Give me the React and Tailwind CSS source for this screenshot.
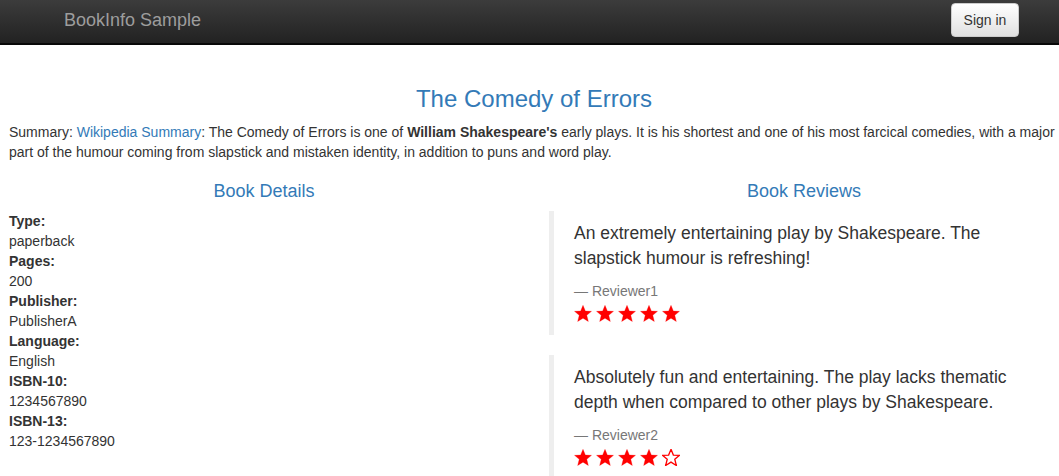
const Star = ({ filled }) => (
  <svg width="18" height="17" viewBox="0 0 24 23" className="shrink-0">
    <path
      d="M12 0.5 L15.2 8.2 L23.5 8.6 L17.1 13.9 L19.2 22.3 L12 17.8 L4.8 22.3 L6.9 13.9 L0.5 8.6 L8.8 8.2 Z"
      fill={filled ? '#ff0000' : 'none'}
      stroke="#ff0000"
      strokeWidth={filled ? 0.4 : 1.8}
      strokeLinejoin="miter"
    />
  </svg>
);

const details = [
  ['Type:', 'paperback'],
  ['Pages:', '200'],
  ['Publisher:', 'PublisherA'],
  ['Language:', 'English'],
  ['ISBN-10:', '1234567890'],
  ['ISBN-13:', '123-1234567890'],
];

const reviews = [
  {
    text: 'An extremely entertaining play by Shakespeare. The slapstick humour is refreshing!',
    reviewer: 'Reviewer1',
    stars: 5,
  },
  {
    text: 'Absolutely fun and entertaining. The play lacks thematic depth when compared to other plays by Shakespeare.',
    reviewer: 'Reviewer2',
    stars: 4,
  },
];

export default function App() {
  return (
    <div className="min-h-[476px] bg-white text-[14px] leading-[20px] text-[#333]" style={{ fontFamily: '"Liberation Sans", Arial, sans-serif' }}>
      {/* navbar */}
      <nav className="flex h-[45px] items-center justify-between border-b-2 border-[#080808] bg-gradient-to-b from-[#3c3c3c] to-[#222] pl-[64px] pr-[40px]">
        <span className="-mt-[3px] text-[18px] text-[#9d9d9d]">BookInfo Sample</span>
        <button className="-mt-[3px] h-[34px] w-[68px] rounded-[4px] border border-[#ccc] bg-gradient-to-b from-white to-[#e0e0e0] text-[14px] text-[#333]">
          Sign in
        </button>
      </nav>

      <div className="pl-[9px]">
        <h3 className="mt-[41px] mb-[10px] text-center text-[24px] leading-[26px] text-[#337ab7]">The Comedy of Errors</h3>
        <p>
          Summary: <a className="text-[#337ab7]">Wikipedia Summary</a>: The Comedy of Errors is one of{' '}
          <b>William Shakespeare's</b> early plays. It is his shortest and one of his most farcical comedies, with a major
          part of the humour coming from slapstick and mistaken identity, in addition to puns and word play.
        </p>

        <div className="mt-[19px] grid grid-cols-[510px_510px] gap-x-[30px]">
          <div>
            <h4 className="mb-[10px] text-center text-[18px] leading-[20px] text-[#337ab7]">Book Details</h4>
            <dl>
              {details.map(([k, v]) => (
                <div key={k}>
                  <dt className="font-bold">{k}</dt>
                  <dd>{v}</dd>
                </div>
              ))}
            </dl>
          </div>
          <div>
            <h4 className="mb-[10px] text-center text-[18px] leading-[20px] text-[#337ab7]">Book Reviews</h4>
            {reviews.map((r) => (
              <blockquote key={r.reviewer} className="mb-[20px] border-l-[5px] border-[#eee] px-[20px] py-[10px]">
                <p className="mb-[10px] text-[17.5px] leading-[25px]">{r.text}</p>
                <div className="text-[14px] leading-[20px] text-[#777]">— {r.reviewer}</div>
                <div className="flex h-[24px] items-center gap-[4px]">
                  {[0, 1, 2, 3, 4].map((i) => (
                    <Star key={i} filled={i < r.stars} />
                  ))}
                </div>
              </blockquote>
            ))}
          </div>
        </div>
      </div>
    </div>
  );
}
